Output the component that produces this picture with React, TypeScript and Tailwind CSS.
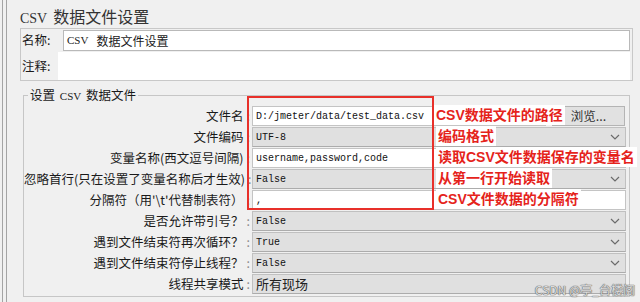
import React from "react";

type Row = {
  label: string;
  kind: "file" | "select" | "text";
  value: string;
  cjk?: boolean;
};

const rows: Row[] = [
  { label: "文件名", kind: "file", value: "D:/jmeter/data/test_data.csv" },
  { label: "文件编码", kind: "select", value: "UTF-8" },
  { label: "变量名称(西文逗号间隔)", kind: "text", value: "username,password,code" },
  { label: "忽略首行(只在设置了变量名称后才生效)", kind: "select", value: "False" },
  { label: "分隔符（用'\\t'代替制表符）", kind: "text", value: "," },
  { label: "是否允许带引号？", kind: "select", value: "False" },
  { label: "遇到文件结束符再次循环？", kind: "select", value: "True" },
  { label: "遇到文件结束符停止线程？", kind: "select", value: "False" },
  { label: "线程共享模式", kind: "select", value: "所有现场", cjk: true },
];

const notes = [
  { text: "CSV数据文件的路径", left: "left-[434px]", top: "top-[105px]" },
  { text: "编码格式", left: "left-[436px]", top: "top-[126px]" },
  { text: "读取CSV文件数据保存的变量名", left: "left-[436px]", top: "top-[147px]" },
  { text: "从第一行开始读取", left: "left-[436px]", top: "top-[168px]" },
  { text: "CSV文件数据的分隔符", left: "left-[436px]", top: "top-[189px]" },
];

function Chevron() {
  return (
    <svg width="10" height="6" viewBox="0 0 10 6" className="shrink-0">
      <polyline points="1,1 5,5 9,1" fill="none" stroke="#6b6b6b" strokeWidth="1.2" />
    </svg>
  );
}

function Value({ row }: { row: Row }) {
  return (
    <span
      className={
        row.cjk
          ? "text-[13px] text-[#222]"
          : "font-['Liberation_Mono',monospace] text-[10px] text-[#111]"
      }
    >
      {row.value}
    </span>
  );
}

function Control({ row }: { row: Row }) {
  if (row.kind === "file") {
    return (
      <div className="flex flex-1 gap-[6px] h-[20px]">
        <div className="w-[294px] bg-white border border-[#c4c4c4] flex items-center pl-[3px]">
          <Value row={row} />
        </div>
        <div className="w-[73px] bg-[#e1e1e1] border border-[#b4b4b4] flex items-center justify-center text-[12.5px] text-[#333]">
          浏览...
        </div>
      </div>
    );
  }
  if (row.kind === "text") {
    return (
      <div className="flex-1 h-[20px] bg-white border border-[#c4c4c4] flex items-center pl-[3px]">
        <Value row={row} />
      </div>
    );
  }
  return (
    <div className="flex-1 h-[20px] bg-[#e0e0e0] border border-[#c0c0c0] border-b-[#acacac] flex items-center justify-between pl-[3px] pr-[5px]">
      <Value row={row} />
      {!row.cjk && <Chevron />}
    </div>
  );
}

export default function App() {
  return (
    <div className="relative w-[640px] h-[302px] overflow-hidden bg-[#f0f0f0] font-['Noto_Sans_CJK_SC',sans-serif] text-[#1a1a1a]">
      <div className="h-full pl-[2px]">
        <div className="h-full border-l border-[#a4a4a4] pl-[3px]">
          <div className="h-full border-l border-[#a4a4a4] pl-[13px] pt-[4px]">
            {/* Title */}
            <div className="h-[24px] leading-[24px] text-[16px] text-[#333]">
              <span className="font-['Liberation_Serif',serif] text-[14px] mr-[6px]">CSV</span>
              数据文件设置
            </div>

            {/* Name / comment */}
            <div className="w-[613px] border border-[#c8c8c8] pt-[1px] pr-[2px] flex flex-col gap-px">
              <div className="flex h-[21px] items-center">
                <div className="w-[42px] pl-[1px] text-[12.5px]">名称:</div>
                <div className="flex-1 h-[21px] bg-white border border-[#b9b9b9] flex items-center pl-[3px] text-[12px]">
                  <span className="font-['Liberation_Serif',serif] text-[11px] mr-[8px]">CSV</span>
                  数据文件设置
                </div>
              </div>
              <div className="flex h-[28px] items-center">
                <div className="w-[37px] pl-[1px] text-[12.5px]">注释:</div>
                <div className="flex-1 h-[28px] bg-white" />
              </div>
            </div>

            {/* CSV settings */}
            <fieldset className="mt-[6px] ml-[3px] w-[607px] border border-[#c6c6c6] pt-[2px] pb-[2px] pr-[3px]">
              <legend className="ml-[4px] px-[2px] leading-[16px] text-[12.5px]">
                设置 <span className="font-['Liberation_Serif',serif] text-[11px] mx-[2px]">CSV</span> 数据文件
              </legend>
              <div className="flex flex-col gap-px">
                {rows.map((row, i) => (
                  <div key={i} className="flex h-[20px] items-center gap-[2px]">
                    <div className="w-[226px] text-right text-[12.5px] leading-[20px] whitespace-nowrap">
                      {row.label}
                      <span className="text-[#8c8c8c] ml-[3px]">:</span>
                    </div>
                    <Control row={row} />
                  </div>
                ))}
              </div>
            </fieldset>
          </div>
        </div>
      </div>

      {/* Annotations */}
      <div className="absolute left-[247px] top-[96px] w-[187px] h-[114px] border-2 border-[#e8302a]" />
      {notes.map((n, i) => (
        <div
          key={i}
          className={`absolute ${n.left} ${n.top} h-[20px] bg-white px-[2px] leading-[20px] text-[14px] font-bold text-[#e5231b] font-['Liberation_Sans','Noto_Sans_CJK_SC',sans-serif] whitespace-nowrap`}
        >
          {n.text}
        </div>
      ))}

      {/* Watermark */}
      <div className="absolute right-[5px] bottom-[4px] text-[12px] leading-[16px] text-[#dcdcdc] [text-shadow:0_0_1px_#6a6a6a,0_0_1px_#6a6a6a,0_0_1px_#6a6a6a]">
        CSDN @亭_台楼阁
      </div>
    </div>
  );
}
